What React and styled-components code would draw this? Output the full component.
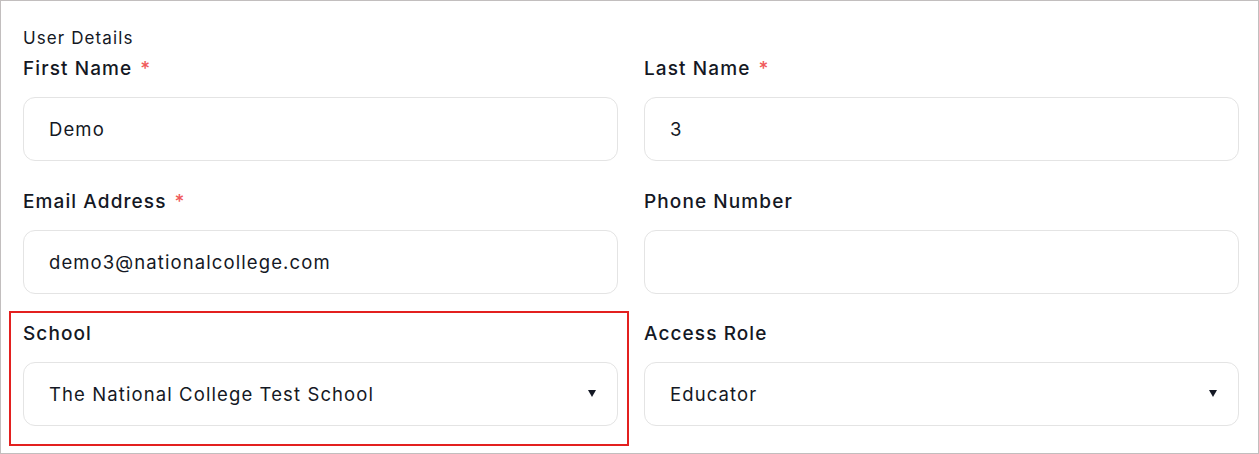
import styled, { createGlobalStyle } from "styled-components";

const GlobalStyle = createGlobalStyle`
  html, body {
    margin: 0;
    padding: 0;
    background: #fff;
  }
  body {
    font-family: Inter, "Noto Sans", sans-serif;
    color: #141824;
  }
  * {
    box-sizing: border-box;
  }
`;

const Panel = styled.div`
  width: 1259px;
  height: 454px;
  border: 1px solid #c2bebe;
  padding: 25px 19px 0 22px;
`;

const Title = styled.div`
  font-size: 17px;
  line-height: 24px;
  font-weight: 400;
  letter-spacing: 1.1px;
  margin-bottom: 7px;
`;

const Grid = styled.div`
  display: grid;
  grid-template-columns: 1fr 1fr;
  column-gap: 26px;
  row-gap: 28.5px;
`;

const Field = styled.div`
  position: relative;
  display: flex;
  flex-direction: column;
  gap: 16px;

  ${(p) =>
    p.$highlight &&
    `
    &::after {
      content: "";
      position: absolute;
      top: -11.5px;
      left: -14px;
      right: -11px;
      bottom: -20px;
      border: 2px solid #e3201f;
      pointer-events: none;
    }
  `}
`;

const Label = styled.label`
  font-size: 19px;
  line-height: 24px;
  font-weight: 500;
  letter-spacing: 1.1px;
  color: #141824;
`;

const Required = styled.span`
  color: #f05a5a;
  margin-left: 8px;
`;

const Box = styled.div`
  height: 64px;
  border: 1px solid #e4e4e4;
  border-radius: 12px;
  display: flex;
  align-items: center;
  justify-content: space-between;
  padding: 0 21px 0 25px;
  font-size: 18.5px;
  letter-spacing: 1.1px;
  color: #141824;
  background: #fff;
`;

const Caret = styled.span`
  width: 0;
  height: 0;
  margin-top: -2px;
  border-left: 4px solid transparent;
  border-right: 4px solid transparent;
  border-top: 7px solid #141824;
`;

const fields = [
  { label: "First Name", required: true, value: "Demo" },
  { label: "Last Name", required: true, value: "3" },
  { label: "Email Address", required: true, value: "demo3@nationalcollege.com" },
  { label: "Phone Number", value: "" },
  { label: "School", value: "The National College Test School", select: true, highlight: true },
  { label: "Access Role", value: "Educator", select: true },
];

export default function App() {
  return (
    <>
      <GlobalStyle />
      <Panel>
        <Title>User Details</Title>
        <Grid>
          {fields.map((f) => (
            <Field key={f.label} $highlight={f.highlight}>
              <Label>
                {f.label}
                {f.required && <Required>*</Required>}
              </Label>
              <Box>
                <span>{f.value}</span>
                {f.select && <Caret />}
              </Box>
            </Field>
          ))}
        </Grid>
      </Panel>
    </>
  );
}
